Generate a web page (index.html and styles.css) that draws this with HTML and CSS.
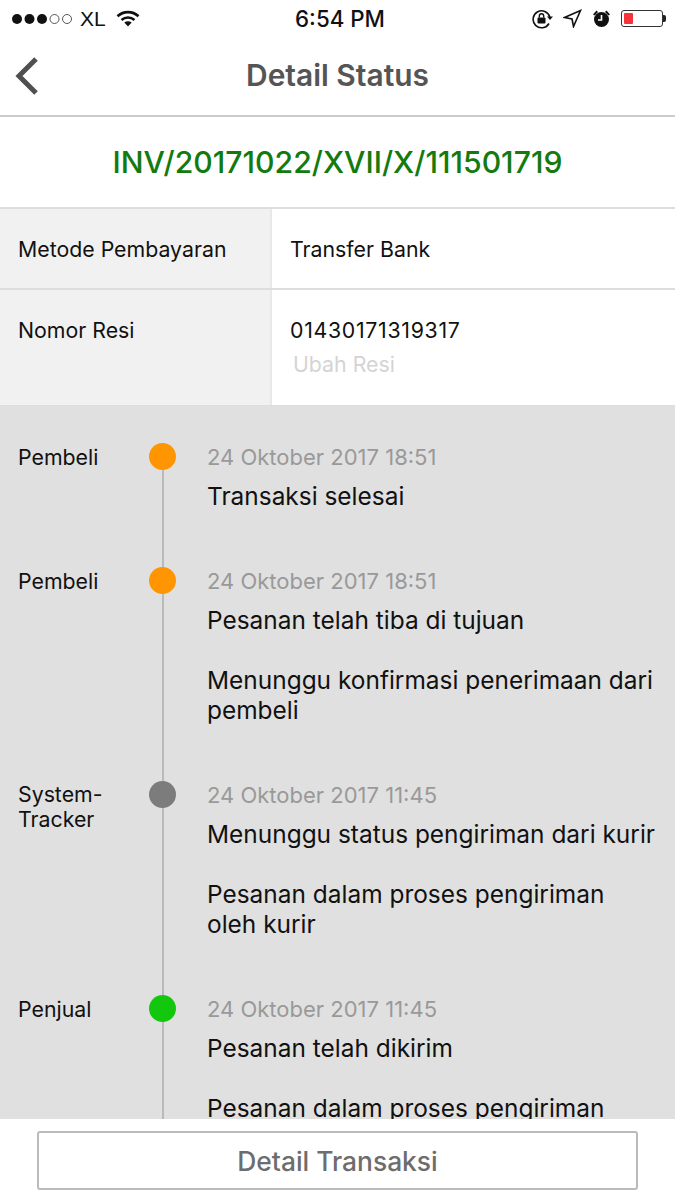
FILE: index.html
```html
<!DOCTYPE html>
<html lang="id">
<head>
<meta charset="utf-8">
<title>Detail Status</title>
<link rel="stylesheet" href="styles.css">
</head>
<body>
<div class="screen">
  <div class="statusbar">
    <div class="sb-left">
      <svg class="signal" width="62" height="12" viewBox="0 0 62 12">
        <circle cx="6" cy="6" r="5"/><circle cx="18.500" cy="6" r="5"/><circle cx="31" cy="6" r="5"/>
        <circle class="off" cx="43.500" cy="6" r="4.500"/><circle class="off" cx="56" cy="6" r="4.500"/>
      </svg>
      <span class="carrier">XL</span>
      <svg class="wifi" width="24" height="17" viewBox="0 0 24 17">
        <path class="arc" d="M1.500 6.200C7.500 .7 16.500 .7 22.500 6.200"/>
        <path class="arc" d="M5.500 10C9.300 6.700 14.700 6.700 18.500 10"/>
        <path class="fill" d="M8.300 12.500C10.600 10.700 13.400 10.700 15.700 12.500L12 16.500Z"/>
      </svg>
    </div>
    <div class="sb-time">6:54 PM</div>
    <div class="sb-right">
      <svg width="21" height="20" viewBox="0 0 21 20">
        <path class="ring" d="M17 14.500A8.500 8.500 0 1 1 17.800 8"/>
        <path class="fill" d="M15 7.500h6l-3 3.500Z"/>
        <rect class="fill" x="5.500" y="8.500" width="8" height="6" rx="1"/>
        <path class="shackle" d="M7.300 8.500V7a2.200 2.200 0 0 1 4.400 0v1.500"/>
      </svg>
      <svg width="19" height="19" viewBox="0 0 19 19">
        <path class="loc" d="M1.500 8.500L17.500 1.500L10.500 17.500L9 10Z"/>
      </svg>
      <svg width="19" height="19" viewBox="0 0 19 19">
        <circle class="fill" cx="9.500" cy="10.500" r="7.500"/>
        <path class="hand" d="M9.500 6v5H6"/>
        <path class="fill" d="M1 5.500L4.500 1.500L6 3L2.500 6.500ZM18 5.500L14.500 1.500L13 3L16.500 6.500Z"/>
      </svg>
      <div class="battery"><div class="battery-level"></div></div>
      <div class="battery-tip"></div>
    </div>
  </div>

  <header class="nav">
    <svg class="back" width="26" height="40" viewBox="0 0 26 40">
      <path d="M23 3L6 20L23 37"/>
    </svg>
    <h1 class="nav-title">Detail Status</h1>
  </header>

  <div class="invoice">INV/20171022/XVII/X/111501719</div>

  <div class="info-row row-method">
    <div class="info-label">Metode Pembayaran</div>
    <div class="info-value">Transfer Bank</div>
  </div>
  <div class="info-row row-resi">
    <div class="info-label">Nomor Resi</div>
    <div class="info-value">
      <div class="num">01430171319317</div>
      <div class="change-link">Ubah Resi</div>
    </div>
  </div>

  <div class="timeline">
    <div class="item">
      <div class="actor">Pembeli</div>
      <div class="track"><span class="dot orange"></span></div>
      <div class="body">
        <div class="date">24 Oktober 2017 18:51</div>
        <p class="msg">Transaksi selesai</p>
      </div>
    </div>
    <div class="item">
      <div class="actor">Pembeli</div>
      <div class="track"><span class="dot orange"></span></div>
      <div class="body">
        <div class="date">24 Oktober 2017 18:51</div>
        <p class="msg">Pesanan telah tiba di tujuan</p>
        <p class="msg gap">Menunggu konfirmasi penerimaan dari pembeli</p>
      </div>
    </div>
    <div class="item">
      <div class="actor actor-wrapped">System-<br>Tracker</div>
      <div class="track"><span class="dot grey"></span></div>
      <div class="body">
        <div class="date">24 Oktober 2017 11:45</div>
        <p class="msg">Menunggu status pengiriman dari kurir</p>
        <p class="msg gap">Pesanan dalam proses pengiriman oleh kurir</p>
      </div>
    </div>
    <div class="item">
      <div class="actor">Penjual</div>
      <div class="track"><span class="dot green"></span></div>
      <div class="body">
        <div class="date">24 Oktober 2017 11:45</div>
        <p class="msg">Pesanan telah dikirim</p>
        <p class="msg gap">Pesanan dalam proses pengiriman oleh kurir</p>
      </div>
    </div>
  </div>

  <div class="footer">
    <button class="btn" type="button">Detail Transaksi</button>
  </div>
</div>
</body>
</html>
```

FILE: styles.css
```css
* { box-sizing: border-box; }
html, body { margin: 0; padding: 0; }
body { background: #fff; font-family: "Inter", "Liberation Sans", sans-serif; color: #111; }
.screen { width: 675px; height: 1200px; display: flex; flex-direction: column; overflow: hidden; }

.statusbar { height: 37px; flex: none; display: grid; grid-template-columns: 1fr auto 1fr; align-items: center; padding: 0 9px 0 11px; color: #111; }
.sb-left { display: flex; align-items: center; gap: 7px; }
.signal circle { fill: #111; }
.signal .off { fill: none; stroke: #555; stroke-width: 1; }
.carrier { font-family: "Liberation Sans", sans-serif; font-size: 21px; }
.wifi { margin-left: 3px; }
.arc { fill: none; stroke: #111; stroke-width: 2.6; }
.fill { fill: #111; }
.sb-time { font-size: 22.300px; font-weight: 500; margin-left: 3px; }
.sb-right { display: flex; align-items: center; justify-content: flex-end; gap: 10px; }
.ring { fill: none; stroke: #111; stroke-width: 1.6; }
.shackle { fill: none; stroke: #111; stroke-width: 1.4; }
.loc { fill: none; stroke: #111; stroke-width: 1.6; stroke-linejoin: miter; }
.hand { fill: none; stroke: #fff; stroke-width: 1.6; }
.battery { width: 42px; height: 17px; border: 1px solid #333; border-radius: 3px; padding: 2px; }
.battery-level { width: 9px; height: 100%; background: #f5333a; border-radius: 1px; }
.battery-tip { width: 3px; height: 7px; background: #222; border-radius: 0 2px 2px 0; margin-left: -10px; }

.nav { height: 80px; flex: none; border-bottom: 2px solid #ccc; display: flex; align-items: center; justify-content: center; position: relative; padding-bottom: 3px; }
.back { position: absolute; left: 13px; top: 19px; }
.back path { fill: none; stroke: #4f4f4f; stroke-width: 5; }
.nav-title { margin: 0; font-size: 29.900px; font-weight: 600; color: #555; }

.invoice { height: 92px; flex: none; border-bottom: 2px solid #ddd; display: flex; align-items: center; justify-content: center; padding-bottom: 1px; font-size: 30.200px; font-weight: 500; color: #137a0d; }

.info-row { display: flex; flex: none; border-bottom: 2px solid #ddd; font-size: 21.300px; }
.row-method { height: 81px; }
.row-resi { height: 116px; border-bottom-width: 1px; }
.info-label { width: 272px; flex: none; background: #f1f1f1; border-right: 2px solid #e8e8e8; padding: 27px 18px 0; }
.info-value { flex: 1; padding: 27px 20px 0 18px; }
.num { letter-spacing: .7px; }
.change-link { color: #d4d4d4; padding: 8px 0 0 3px; }

.timeline { flex: 1; min-height: 0; overflow: hidden; background: #e0e0e0; padding-top: 37px; }
.item { display: flex; padding-bottom: 56px; position: relative; }
.actor { width: 149px; flex: none; padding-left: 18px; font-size: 21.300px; line-height: 25px; padding-top: 2px; }
.actor-wrapped { padding-top: 1px; }
.track { width: 27px; flex: none; position: relative; }
.track::before { content: ""; position: absolute; left: 13px; top: 14px; bottom: -200px; width: 2px; background: #b9b9b9; }
.dot { position: absolute; left: 0; top: 0; width: 27px; height: 27px; border-radius: 50%; }
.orange { background: #ff9500; }
.grey { background: #7c7c7c; }
.green { background: #13c70e; }
.body { flex: 1; padding: 0 15px 0 31px; }
.date { font-size: 22px; line-height: 28px; color: #999; }
.msg { margin: 10px 0 0; font-size: 24.450px; line-height: 30px; }
.msg.gap { margin-top: 30px; }

.footer { height: 81px; flex: none; background: #fff; padding: 12px 37px 0 37px; }
.btn { display: block; width: 601px; height: 59px; background: #fff; border: 2px solid #bbb; border-radius: 3px; font: 500 26.400px "Inter", "Liberation Sans", sans-serif; color: #6d6d6d; }
```
